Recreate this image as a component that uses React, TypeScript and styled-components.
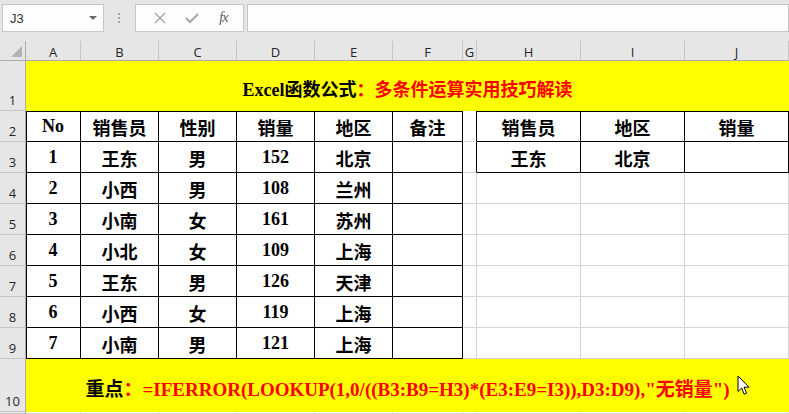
import React from "react";
import styled, { createGlobalStyle } from "styled-components";

//styled-components//

const GlobalStyle = createGlobalStyle`
  html, body {
    margin: 0;
    padding: 0;
    width: 789px;
    height: 414px;
    overflow: hidden;
    background: #e6e6e6;
  }
`;

const Page = styled.div`
  position: relative;
  width: 789px;
  height: 414px;
  display: flex;
  flex-direction: column;
  font-family: "Liberation Sans", sans-serif;
`;

const Toolbar = styled.div`
  height: 41px;
  box-sizing: border-box;
  padding: 4px 0 0 2px;
  display: flex;
  align-items: flex-start;
  background: #e6e6e6;
`;

const Box = styled.div<{ $w: string }>`
  width: ${(p) => p.$w};
  height: 28px;
  box-sizing: border-box;
  background: #fdfdfd;
  border: 1px solid #c6c6c6;
  display: flex;
  align-items: center;
`;

const NameText = styled.span`
  flex: 1;
  padding-left: 7px;
  font-size: 13px;
  color: #333;
`;

const Caret = styled.span`
  width: 0;
  height: 0;
  margin-right: 6px;
  border-left: 4px solid transparent;
  border-right: 4px solid transparent;
  border-top: 4px solid #6a6a6a;
`;

const Dots = styled.div`
  width: 31px;
  height: 28px;
  display: flex;
  flex-direction: column;
  align-items: center;
  justify-content: center;
  gap: 2px;
  & > i {
    width: 2px;
    height: 2px;
    background: #a8a8a8;
  }
`;

const FxButtons = styled.div`
  flex: 1;
  display: flex;
  justify-content: space-around;
  align-items: center;
  padding: 0 6px 0 8px;
`;

const Fx = styled.span`
  font-family: "Liberation Serif", serif;
  font-style: italic;
  font-size: 14px;
  color: #555;
  letter-spacing: -1px;
`;

const Sheet = styled.div`
  flex: 1;
  display: grid;
  grid-template-columns: 26px 55px 78px 78px 78px 78px 70px 14px 104px 104px 104px;
  grid-template-rows: 20px 50px repeat(8, 31px) 53px 1fr;
  background: #fff;
`;

const Corner = styled.div`
  background: #e6e6e6;
  border-right: 1px solid #ababab;
  border-bottom: 1px solid #ababab;
  display: flex;
  align-items: flex-end;
  justify-content: flex-end;
  padding: 0 3px 3px 0;
  box-sizing: border-box;
  & > i {
    width: 0;
    height: 0;
    border-left: 11px solid transparent;
    border-bottom: 11px solid #b4b4b4;
  }
`;

const ColHead = styled.div`
  background: #e6e6e6;
  border-right: 1px solid #c6c6c6;
  border-bottom: 1px solid #ababab;
  box-sizing: border-box;
  display: flex;
  align-items: center;
  justify-content: center;
  font-family: "Open Sans", "Liberation Sans", sans-serif;
  font-size: 13px;
  color: #262626;
  padding-top: 2px;
`;

const RowHead = styled.div`
  background: #e6e6e6;
  border-right: 1px solid #ababab;
  border-bottom: 1px solid #c6c6c6;
  box-sizing: border-box;
  display: flex;
  align-items: flex-end;
  justify-content: center;
  font-family: "Open Sans", "Liberation Sans", sans-serif;
  font-size: 13px;
  color: #262626;
  padding-bottom: 1px;
`;

type Line = "grid" | "black";

const Cell = styled.div<{ $r?: Line; $b?: Line; $t?: boolean; $l?: boolean }>`
  box-sizing: border-box;
  border-right: 1px solid ${(p) => (p.$r === "black" ? "#000" : "#d4d4d4")};
  border-bottom: 1px solid ${(p) => (p.$b === "black" ? "#000" : "#d4d4d4")};
  box-shadow: ${(p) =>
    [p.$t ? "inset 0 1px 0 #000" : "", p.$l ? "inset 1px 0 0 #000" : ""]
      .filter(Boolean)
      .join(", ") || "none"};
  display: flex;
  align-items: center;
  justify-content: center;
  font-family: "Liberation Serif", "Noto Sans CJK SC", serif;
  font-weight: 700;
  font-size: 18px;
  color: #000;
  padding-top: 1px;
`;

const Banner = styled.div<{ $size?: number }>`
  grid-column: 2 / -1;
  background: #ffff00;
  display: flex;
  align-items: center;
  justify-content: center;
  font-family: "Liberation Serif", "Noto Sans CJK SC", serif;
  font-weight: 700;
  font-size: ${(p) => p.$size || 18}px;
  color: #000;
  white-space: nowrap;
  padding-top: 4px;
  box-sizing: border-box;
`;

const Red = styled.span`
  color: #ff0000;
`;

const Pointer = styled.svg`
  position: absolute;
  left: 737px;
  top: 375px;
`;

////////////////////

const cols = ["A", "B", "C", "D", "E", "F", "G", "H", "I", "J"];

const header = ["No", "销售员", "性别", "销量", "地区", "备注"];

const data: string[][] = [
  ["1", "王东", "男", "152", "北京", ""],
  ["2", "小西", "男", "108", "兰州", ""],
  ["3", "小南", "女", "161", "苏州", ""],
  ["4", "小北", "女", "109", "上海", ""],
  ["5", "王东", "男", "126", "天津", ""],
  ["6", "小西", "女", "119", "上海", ""],
  ["7", "小南", "男", "121", "上海", ""],
];

const lookup: string[][] = [
  ["销售员", "地区", "销量"],
  ["王东", "北京", ""],
];

const App = () => {
  const rows = [header, ...data];
  return (
    <Page>
      <GlobalStyle />
      <Toolbar>
        <Box $w="102px">
          <NameText>J3</NameText>
          <Caret />
        </Box>
        <Dots>
          <i />
          <i />
          <i />
        </Dots>
        <Box $w="110px">
          <FxButtons>
            <svg width="12" height="12" viewBox="0 0 12 12">
              <path d="M1 1 L11 11 M11 1 L1 11" stroke="#a3a3a3" strokeWidth="1.3" fill="none" />
            </svg>
            <svg width="14" height="12" viewBox="0 0 14 12">
              <path d="M1 6 L5 10 L13 2" stroke="#a8a8a8" strokeWidth="2" fill="none" />
            </svg>
            <Fx>fx</Fx>
          </FxButtons>
        </Box>
        <Box $w="543px" style={{ marginLeft: 3 }} />
      </Toolbar>

      <Sheet>
        <Corner>
          <i />
        </Corner>
        {cols.map((c) => (
          <ColHead key={c}>{c}</ColHead>
        ))}

        <RowHead>1</RowHead>
        <Banner>
          Excel函数公式<Red>：多条件运算实用技巧解读</Red>
        </Banner>

        {rows.map((row, ri) => {
          const rowNo = ri + 2;
          const right = ri < 2 ? lookup[ri] : null;
          return (
            <React.Fragment key={rowNo}>
              <RowHead>{rowNo}</RowHead>
              {row.map((v, ci) => (
                <Cell key={ci} $r="black" $b="black" $t={ri === 0} $l={ci === 0}>
                  {v}
                </Cell>
              ))}
              <Cell $r={right ? "black" : "grid"} />
              {[0, 1, 2].map((ci) => (
                <Cell
                  key={"r" + ci}
                  $r={right ? "black" : "grid"}
                  $b={ri < 2 ? "black" : "grid"}
                  $t={ri === 0}
                >
                  {right ? right[ci] : ""}
                </Cell>
              ))}
            </React.Fragment>
          );
        })}

        <RowHead>10</RowHead>
        <Banner $size={19}>
          重点<Red>：=IFERROR(LOOKUP(1,0/((B3:B9=H3)*(E3:E9=I3)),D3:D9),"无销量")</Red>
        </Banner>

        <RowHead />
        {cols.map((c) => (
          <Cell key={"e" + c} />
        ))}
      </Sheet>

      <Pointer width="14" height="21" viewBox="0 0 14 21">
        <path
          d="M1 1 L1 16.5 L4.6 13 L7.2 19.2 L9.6 18.2 L7 12.2 L12 12.2 Z"
          fill="#fff"
          stroke="#000"
          strokeWidth="1"
          strokeLinejoin="miter"
        />
      </Pointer>
    </Page>
  );
};

export default App;
